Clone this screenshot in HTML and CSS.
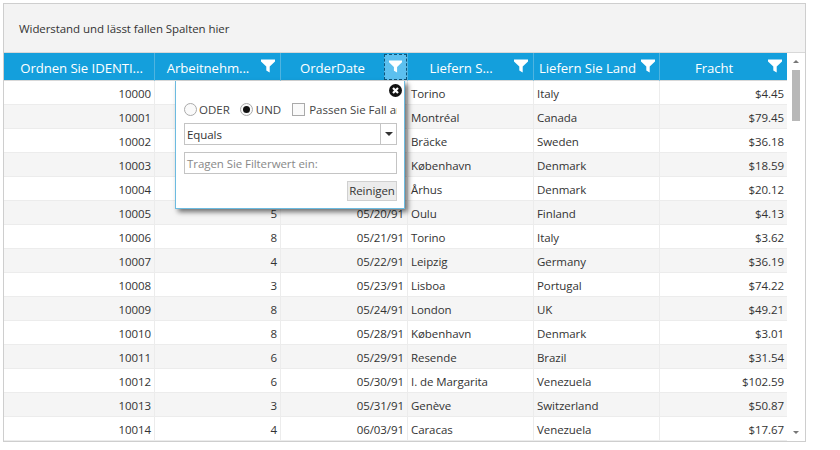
FILE: index.html
```html
<!DOCTYPE html>
<html lang="en">
<head>
    <meta charset="UTF-8">
    <meta name="viewport" content="width=device-width, initial-scale=1.0">
    <title>Grid Filter</title>
    <link rel="stylesheet" href="styles.css">
</head>
<body>
    <svg class="icon-defs" width="0" height="0">
        <symbol id="funnel" viewBox="0 0 14 14"><path d="M0 0.5H14V2.5L8.7 7.5V13.5L5.3 11.5V7.5L0 2.5Z"/></symbol>
    </svg>
    <div class="grid">
        <div class="group-area">Widerstand und lässt fallen Spalten hier</div>
        <div class="grid-main">
            <div class="grid-body">
                <table class="data-table">
                    <colgroup>
                        <col class="col-1"><col class="col-2"><col class="col-3"><col class="col-4"><col class="col-5"><col class="col-6">
                    </colgroup>
                    <thead>
                        <tr>
                            <th><div class="head head-first"><span class="head-text">Ordnen Sie IDENTI...</span></div></th>
                            <th><div class="head"><span class="head-text">Arbeitnehm...</span><svg class="funnel"><use href="#funnel"/></svg></div></th>
                            <th><div class="head"><span class="head-text">OrderDate</span><span class="funnel-active"><svg class="funnel"><use href="#funnel"/></svg></span></div></th>
                            <th><div class="head"><span class="head-text">Liefern S...</span><svg class="funnel"><use href="#funnel"/></svg></div></th>
                            <th><div class="head"><span class="head-text">Liefern Sie Land</span><svg class="funnel funnel-tight"><use href="#funnel"/></svg></div></th>
                            <th><div class="head"><span class="head-text">Fracht</span><svg class="funnel"><use href="#funnel"/></svg></div></th>
                        </tr>
                    </thead>
                    <tbody>
                        <tr><td class="num">10000</td><td></td><td></td><td>Torino</td><td>Italy</td><td class="num">$4.45</td></tr>
                        <tr><td class="num">10001</td><td></td><td></td><td>Montréal</td><td>Canada</td><td class="num">$79.45</td></tr>
                        <tr><td class="num">10002</td><td></td><td></td><td>Bräcke</td><td>Sweden</td><td class="num">$36.18</td></tr>
                        <tr><td class="num">10003</td><td></td><td></td><td>København</td><td>Denmark</td><td class="num">$18.59</td></tr>
                        <tr><td class="num">10004</td><td></td><td></td><td>Århus</td><td>Denmark</td><td class="num">$20.12</td></tr>
                        <tr><td class="num">10005</td><td class="num">5</td><td class="num">05/20/91</td><td>Oulu</td><td>Finland</td><td class="num">$4.13</td></tr>
                        <tr><td class="num">10006</td><td class="num">8</td><td class="num">05/21/91</td><td>Torino</td><td>Italy</td><td class="num">$3.62</td></tr>
                        <tr><td class="num">10007</td><td class="num">4</td><td class="num">05/22/91</td><td>Leipzig</td><td>Germany</td><td class="num">$36.19</td></tr>
                        <tr><td class="num">10008</td><td class="num">3</td><td class="num">05/23/91</td><td>Lisboa</td><td>Portugal</td><td class="num">$74.22</td></tr>
                        <tr><td class="num">10009</td><td class="num">8</td><td class="num">05/24/91</td><td>London</td><td>UK</td><td class="num">$49.21</td></tr>
                        <tr><td class="num">10010</td><td class="num">8</td><td class="num">05/28/91</td><td>København</td><td>Denmark</td><td class="num">$3.01</td></tr>
                        <tr><td class="num">10011</td><td class="num">6</td><td class="num">05/29/91</td><td>Resende</td><td>Brazil</td><td class="num">$31.54</td></tr>
                        <tr><td class="num">10012</td><td class="num">6</td><td class="num">05/30/91</td><td>I. de Margarita</td><td>Venezuela</td><td class="num">$102.59</td></tr>
                        <tr><td class="num">10013</td><td class="num">3</td><td class="num">05/31/91</td><td>Genève</td><td>Switzerland</td><td class="num">$50.87</td></tr>
                        <tr><td class="num">10014</td><td class="num">4</td><td class="num">06/03/91</td><td>Caracas</td><td>Venezuela</td><td class="num">$17.67</td></tr>
                    </tbody>
                </table>

                <div class="filter-popup">
                    <svg class="popup-close" viewBox="0.5 0.5 13 13" width="13" height="13">
                        <circle cx="7" cy="7" r="6.5" fill="#111"/>
                        <path d="M4.5 4.5L9.5 9.5M9.5 4.5L4.5 9.5" stroke="#fff" stroke-width="2.2"/>
                    </svg>
                    <div class="popup-options">
                        <span class="option"><span class="radio"></span>ODER</span>
                        <span class="option option-and"><span class="radio radio-on"></span>UND</span>
                        <span class="option option-case"><span class="checkbox"></span><span class="case-text">Passen Sie Fall an</span></span>
                    </div>
                    <div class="select-box">
                        <span class="select-text">Equals</span>
                        <span class="select-arrow"><span class="arrow-down"></span></span>
                    </div>
                    <div class="value-box">Tragen Sie Filterwert ein:</div>
                    <div class="popup-footer"><span class="clear-btn">Reinigen</span></div>
                </div>
            </div>
            <div class="scrollbar">
                <span class="arrow-up"></span>
                <div class="scroll-track"><div class="scroll-thumb"></div></div>
                <span class="arrow-down small"></span>
            </div>
        </div>
    </div>
</body>
</html>
```

FILE: styles.css
```css
* {
    box-sizing: border-box;
}

body {
    margin: 0;
    padding: 3px 0 0 3px;
    background-color: #fff;
    font-family: "Open Sans", "Noto Sans", sans-serif;
    font-size: 11.5px;
    letter-spacing: -0.07px;
    color: #333;
    overflow: hidden;
}

.icon-defs {
    position: absolute;
}

.grid {
    width: 803px;
    height: 439px;
    border: 1px solid #cecece;
    display: flex;
    flex-direction: column;
    overflow: hidden;
}

.group-area {
    height: 49px;
    flex: none;
    padding: 16px 0 0 15px;
    line-height: 17px;
    background-color: #f3f3f3;
    border-bottom: 1px solid #d8d8d8;
}

.grid-main {
    flex: 1;
    display: flex;
    min-height: 0;
}

.grid-body {
    position: relative;
    width: 783px;
    overflow: hidden;
}

.data-table {
    width: 783px;
    table-layout: fixed;
    border-collapse: separate;
    border-spacing: 0;
}

.col-1 { width: 151px; }
.col-2 { width: 126px; }
.col-3 { width: 127px; }
.col-4 { width: 126px; }
.col-5 { width: 126px; }
.col-6 { width: 127px; }

.data-table th {
    height: 28px;
    padding: 0;
    background-color: #149fdc;
    border-right: 1px solid #4fb4e0;
    border-bottom: 1px solid #d8d8d8;
    color: #fff;
    font-weight: 400;
    font-size: 13.2px;
}

.data-table th:last-child,
.data-table td:last-child {
    border-right: none;
}

.head {
    display: flex;
    align-items: center;
    height: 27px;
}

.head-first {
    padding-left: 5px;
}

.head-text {
    flex: 1;
    padding-top: 2px;
    text-align: center;
    white-space: nowrap;
}

.funnel {
    width: 14px;
    height: 14px;
    flex: none;
    margin-right: 5px;
    margin-top: -1px;
    fill: #fff;
}

.funnel-tight {
    margin-right: 4px;
}

.funnel-active {
    width: 23px;
    height: 26px;
    flex: none;
    display: flex;
    align-items: center;
    justify-content: center;
    background-color: #5cc0ef;
    border: 1px dashed #10557a;
}

.funnel-active .funnel {
    width: 13px;
    height: 13px;
    margin: 0;
}

.data-table td {
    height: 24px;
    padding: 1px 3px 0;
    border-right: 1px solid #ececec;
    border-bottom: 1px solid #ececec;
    white-space: nowrap;
    overflow: hidden;
}

.data-table tbody tr:nth-child(even) td {
    background-color: #f5f5f5;
}

.data-table td.num {
    text-align: right;
}

.filter-popup {
    position: absolute;
    left: 171px;
    top: 28px;
    width: 230px;
    height: 128px;
    padding: 20px 7px 0 8px;
    background-color: #fff;
    border: 1px solid #6cbbe0;
    border-top: none;
    box-shadow: 3px 3px 5px rgba(0, 0, 0, 0.55);
}

.popup-close {
    position: absolute;
    right: 2px;
    top: 3px;
}

.popup-options {
    display: flex;
    align-items: center;
    height: 16px;
    color: #444;
    letter-spacing: 0;
    overflow: hidden;
}

.option {
    display: flex;
    align-items: center;
    gap: 2px;
    margin-right: 10px;
    white-space: nowrap;
}

.option-and {
    gap: 3px;
    margin-right: 11px;
}

.option-case {
    margin-right: 0;
    gap: 4px;
    flex: 1;
    min-width: 0;
    overflow: hidden;
}

.radio {
    width: 13px;
    height: 13px;
    flex: none;
    border: 1px solid #aaa;
    border-radius: 50%;
    background-color: #fafafa;
    display: inline-flex;
    align-items: center;
    justify-content: center;
}

.radio-on::after {
    content: "";
    width: 7px;
    height: 7px;
    border-radius: 50%;
    background-color: #111;
}

.checkbox {
    width: 13px;
    height: 13px;
    flex: none;
    border: 1px solid #aaa;
    background-color: #fafafa;
}

.select-box {
    display: flex;
    height: 22px;
    margin-top: 6px;
    border: 1px solid #c4c4c4;
    line-height: 21px;
}

.select-text {
    flex: 1;
    padding-left: 2px;
}

.select-arrow {
    width: 16px;
    border-left: 1px solid #c4c4c4;
    display: flex;
    align-items: center;
    justify-content: center;
}

.arrow-down {
    width: 0;
    height: 0;
    border-left: 4px solid transparent;
    border-right: 4px solid transparent;
    border-top: 4px solid #333;
}

.value-box {
    height: 22px;
    margin-top: 7px;
    padding-left: 2px;
    border: 1px solid #c4c4c4;
    line-height: 21px;
    color: #888;
}

.popup-footer {
    display: flex;
    justify-content: flex-end;
    margin-top: 7px;
}

.clear-btn {
    height: 20px;
    width: 50px;
    line-height: 18px;
    text-align: center;
    background-color: #ececec;
    border: 1px solid #d0d0d0;
}

.scrollbar {
    width: 18px;
    display: flex;
    flex-direction: column;
    align-items: center;
    padding: 7px 0 7px;
}

.arrow-up {
    width: 0;
    height: 0;
    border-left: 3px solid transparent;
    border-right: 3px solid transparent;
    border-bottom: 3px solid #777;
}

.scroll-track {
    flex: 1;
    width: 8px;
    padding-top: 7px;
}

.scroll-thumb {
    height: 51px;
    background-color: #b8b8b8;
}

.arrow-down.small {
    border-left-width: 3px;
    border-right-width: 3px;
    border-top: 3px solid #777;
}
```
